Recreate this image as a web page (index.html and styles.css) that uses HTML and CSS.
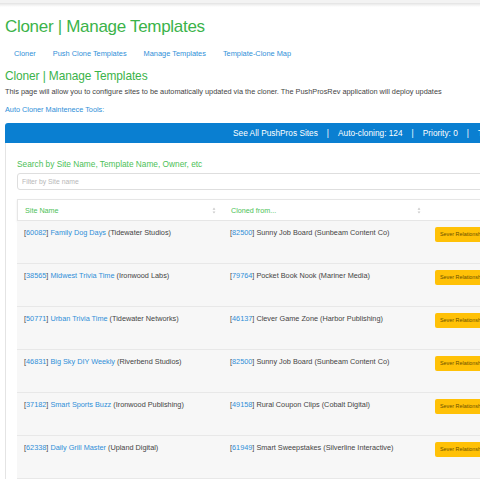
FILE: index.html
```html
<!DOCTYPE html>
<html>
<head>
<meta charset="utf-8">
<link rel="stylesheet" href="styles.css">
</head>
<body>
<div class="topbar"></div>
<div class="page">
  <h1 class="title">Cloner | Manage Templates</h1>
  <ul class="nav">
    <li><a>Cloner</a></li>
    <li><a>Push Clone Templates</a></li>
    <li><a>Manage Templates</a></li>
    <li><a>Template-Clone Map</a></li>
  </ul>
  <h2 class="subtitle">Cloner | Manage Templates</h2>
  <p class="intro">This page will allow you to configure sites to be automatically updated via the cloner. The PushProsRev application will deploy updates</p>
  <a class="tools">Auto Cloner Maintenece Tools:</a>

  <div class="card">
    <div class="bluebar">
      <span>See All PushPros Sites</span><span class="sep">|</span><span>Auto-cloning: 124</span><span class="sep">|</span><span>Priority: 0</span><span class="sep">|</span><span>Templates: 36</span>
    </div>
    <div class="panel">
      <div class="search-label">Search by Site Name, Template Name, Owner, etc</div>
      <div class="filter">Filter by Site name</div>
      <div class="table">
        <div class="thead">
          <div class="th">Site Name<svg class="sort" viewBox="0 0 4 8"><path d="M2 0.5L3.6 3H0.4z M2 7.5L3.6 5H0.4z"/></svg></div>
          <div class="th">Cloned from...<svg class="sort" viewBox="0 0 4 8"><path d="M2 0.5L3.6 3H0.4z M2 7.5L3.6 5H0.4z"/></svg></div>
          <div class="th"></div>
        </div>
        <div class="row">
          <div class="td">[<a>60082</a>] <a>Family Dog Days</a> (Tidewater Studios)</div>
          <div class="td">[<a>82500</a>] Sunny Job Board (Sunbeam Content Co)</div>
          <div class="td"><span class="btn">Sever Relationship</span></div>
        </div>
        <div class="row">
          <div class="td">[<a>38565</a>] <a>Midwest Trivia Time</a> (Ironwood Labs)</div>
          <div class="td">[<a>79764</a>] Pocket Book Nook (Mariner Media)</div>
          <div class="td"><span class="btn">Sever Relationship</span></div>
        </div>
        <div class="row">
          <div class="td">[<a>50771</a>] <a>Urban Trivia Time</a> (Tidewater Networks)</div>
          <div class="td">[<a>46137</a>] Clever Game Zone (Harbor Publishing)</div>
          <div class="td"><span class="btn">Sever Relationship</span></div>
        </div>
        <div class="row">
          <div class="td">[<a>46831</a>] <a>Big Sky DIY Weekly</a> (Riverbend Studios)</div>
          <div class="td">[<a>82500</a>] Sunny Job Board (Sunbeam Content Co)</div>
          <div class="td"><span class="btn">Sever Relationship</span></div>
        </div>
        <div class="row">
          <div class="td">[<a>37182</a>] <a>Smart Sports Buzz</a> (Ironwood Publishing)</div>
          <div class="td">[<a>49158</a>] Rural Coupon Clips (Cobalt Digital)</div>
          <div class="td"><span class="btn">Sever Relationship</span></div>
        </div>
        <div class="row">
          <div class="td">[<a>62338</a>] <a>Daily Grill Master</a> (Upland Digital)</div>
          <div class="td">[<a>61949</a>] Smart Sweepstakes (Silverline Interactive)</div>
          <div class="td"><span class="btn">Sever Relationship</span></div>
        </div>
      </div>
    </div>
  </div>
</div>
</body>
</html>
```
FILE: styles.css
```css
html, body {
  margin: 0;
  padding: 0;
  overflow: hidden;
  background: #fff;
}
body {
  font-family: "Liberation Sans", Arial, sans-serif;
  color: #333;
  width: 480px;
  height: 480px;
}
.topbar {
  height: 7px;
  background: linear-gradient(#f3f3f3 0, #f3f3f3 3px, #e2e2e2 3px, #f2f2f2 5px, #fff 7px);
}
.page {
  width: 620px;
  padding-left: 5px;
}
a { color: #2f8fd8; }
.title {
  margin: 9px 0 0 0;
  font-size: 17px;
  font-weight: normal;
  color: #3bb34a;
  line-height: 22px;
  letter-spacing: -0.3px;
}
.nav {
  list-style: none;
  display: flex;
  gap: 17px;
  margin: 11px 0 0 0;
  padding: 0 0 0 9px;
  font-size: 7.4px;
  line-height: 10px;
}
.subtitle {
  margin: 9px 0 0 0;
  font-size: 11.9px;
  font-weight: normal;
  color: #3bb34a;
  line-height: 16px;
  letter-spacing: -0.1px;
}
.intro {
  margin: 3px 0 0 0;
  font-size: 7.35px;
  line-height: 9px;
  color: #444;
  white-space: nowrap;
}
.tools {
  display: block;
  margin-top: 9px;
  font-size: 7.3px;
  line-height: 9px;
}
.card {
  margin-top: 9px;
}
.bluebar {
  height: 20px;
  background: #0a7fd1;
  border-radius: 3px 0 0 0;
  color: #fff;
  font-size: 8.3px;
  display: flex;
  align-items: center;
  padding-left: 228px;
  white-space: nowrap;
}
.sep { margin: 0 9px; }
.panel {
  border-left: 1px solid #e4e4e4;
  padding: 16px 0 0 11px;
}
.search-label {
  color: #4cbf57;
  font-size: 8.3px;
  line-height: 10px;
}
.filter {
  margin-top: 4px;
  height: 15px;
  border: 1px solid #dedede;
  border-radius: 3px;
  font-size: 6.8px;
  color: #b8b8b8;
  display: flex;
  align-items: center;
  padding-left: 4px;
}
.table {
  margin-top: 9px;
}
.thead, .row {
  display: grid;
  grid-template-columns: 206px 205px 1fr;
}
.thead {
  height: 22px;
  border: 1px solid #e6e6e6;
  background: #fff;
  box-shadow: 0 1px 2px rgba(0,0,0,0.08);
  align-items: center;
  box-sizing: border-box;
}
.th {
  color: #4cbf57;
  font-size: 7.2px;
  padding-left: 7px;
  padding-right: 8px;
  display: flex;
  align-items: center;
  justify-content: space-between;
}
.sort {
  width: 4px;
  height: 7px;
  fill: #c9c9c9;
}
.row {
  height: 43px;
  background: #f7f7f7;
  border-bottom: 1px solid #e8e8e8;
  box-sizing: border-box;
}
.td {
  font-size: 7.3px;
  line-height: 9px;
  padding: 7px 0 0 7px;
  color: #444;
  white-space: nowrap;
}
.btn {
  display: inline-block;
  margin-top: -1px;
  background: #ffc107;
  color: #6b5000;
  font-size: 5.4px;
  line-height: 15px;
  height: 15px;
  padding: 0 5px;
  border-radius: 2px;
}
```
